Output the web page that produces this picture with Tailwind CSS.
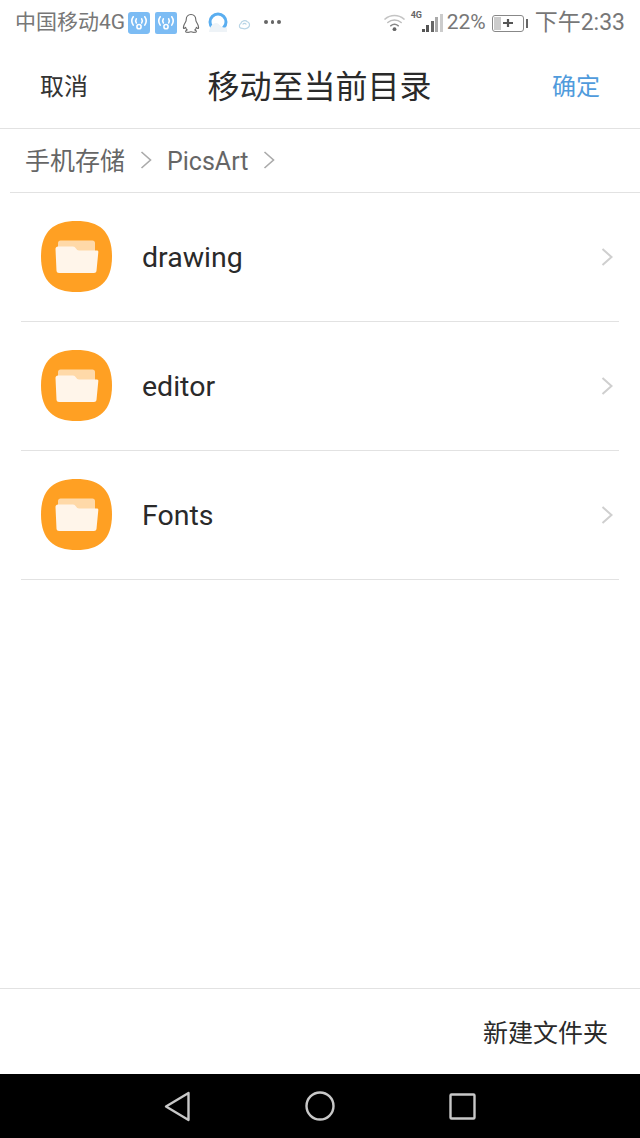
<!DOCTYPE html>
<html lang="zh">
<head>
  <meta charset="UTF-8" />
  <meta name="viewport" content="width=device-width, initial-scale=1.0" />
  <title>移动至当前目录</title>
  <script src="https://cdn.jsdelivr.net/npm/@tailwindcss/browser@4"></script>
</head>
<body class="bg-white font-['Roboto','Noto_Sans_CJK_SC',sans-serif]">
  <div class="w-[640px] h-[1138px] flex flex-col overflow-hidden">

    <!-- status bar -->
    <div class="h-[46px] flex items-center justify-between pl-[15px] pr-[15px] text-[#777] text-[21px] shrink-0">
      <div class="flex items-center">
        <span class="w-[112px] whitespace-nowrap">中国移动4G</span>
        <svg class="ml-[1px]" width="22" height="22" viewBox="0 0 21 21">
          <rect width="21" height="21" rx="3" fill="#7cbcf4"/>
          <g fill="none" stroke="#fff" stroke-width="1.5" stroke-linecap="round">
            <path d="M5 4.500a7 7 0 0 0 0 8"/><path d="M16 4.500a7 7 0 0 1 0 8"/>
            <path d="M8 6.500a3.500 3.500 0 0 0 0 4"/><path d="M13 6.500a3.500 3.500 0 0 1 0 4"/>
            <circle cx="10.500" cy="14" r="2"/>
          </g>
        </svg>
        <svg class="ml-[5px]" width="22" height="22" viewBox="0 0 21 21">
          <rect width="21" height="21" rx="2" fill="#7cbcf4"/>
          <g fill="none" stroke="#fff" stroke-width="1.5" stroke-linecap="round">
            <path d="M5 4.500a7 7 0 0 0 0 8"/><path d="M16 4.500a7 7 0 0 1 0 8"/>
            <path d="M8 6.500a3.500 3.500 0 0 0 0 4"/><path d="M13 6.500a3.500 3.500 0 0 1 0 4"/>
            <circle cx="10.500" cy="14" r="2"/>
          </g>
        </svg>
        <!-- qq -->
        <svg class="ml-[5px]" width="18" height="21" viewBox="0 0 18 21" fill="none" stroke="#666" stroke-width="1.100" stroke-linejoin="round">
          <path d="M9 1.500c-3.200 0-4.800 2.300-4.800 5.200 0 1-.2 1.600-.8 2.600-1 1.600-2 3.600-2 5.200 0 1 .5 1.200 1 .8l1.200-1c.3 1.100.8 2 1.600 2.700-1 .4-1.800 1-1.500 1.700.4.800 3 .8 4.300.2.500-.2 1.500-.2 2 0 1.300.6 3.900.6 4.300-.2.300-.7-.5-1.300-1.500-1.700.8-.7 1.300-1.600 1.600-2.700l1.200 1c.5.400 1 .2 1-.8 0-1.600-1-3.600-2-5.200-.6-1-.8-1.600-.8-2.600C13.800 3.800 12.200 1.500 9 1.500z"/>
        </svg>
        <!-- browser round icon -->
        <svg class="ml-[8px]" width="20" height="22" viewBox="0 0 20 22">
          <circle cx="10" cy="10" r="8" fill="none" stroke="#5aaef0" stroke-width="3"/>
          <path d="M1 20c1-6 4-9 7-9 3 0 4 3 6 4 2 .7 4 .5 5 .5v4.500z" fill="#eef3f7"/>
        </svg>
        <!-- small cloud -->
        <svg class="ml-[10px] mt-[2px]" width="13" height="13" viewBox="0 0 14 14" fill="none" stroke="#b9d5e6" stroke-width="1.300">
          <path d="M3 11c-2-1-2-4 0-5 .5-3 5-4 7-2 2 .5 3 3 2 5-1 2-4 3-6 2.500z"/>
          <path d="M5 7c1-1.500 3-1.500 4 0" />
        </svg>
        <div class="ml-[13px] flex gap-[3px] -mt-[2px]">
          <span class="w-[3.500px] h-[3.500px] rounded-full bg-[#666]"></span>
          <span class="w-[3.500px] h-[3.500px] rounded-full bg-[#666]"></span>
          <span class="w-[3.500px] h-[3.500px] rounded-full bg-[#666]"></span>
        </div>
      </div>
      <div class="flex items-center">
        <svg class="-mt-[3px]" width="23" height="20" viewBox="0 0 24 20" fill="none" stroke-linecap="round">
          <path d="M2 7c6-5 14-5 20 0" stroke="#c4c4c4" stroke-width="1.500"/>
          <path d="M5 10.500c4-3.500 10-3.500 14 0" stroke="#bbb" stroke-width="1.500"/>
          <path d="M8 14c2.500-2 5.500-2 8 0" stroke="#888" stroke-width="1.500"/>
          <circle cx="12" cy="17.500" r="2" fill="#666"/>
        </svg>
        <div class="relative ml-[5px] w-[33px] h-[22px] -mt-[3px]">
          <span class="absolute left-0 -top-[1px] text-[9px] font-bold text-[#666] leading-[10px]">4G</span>
          <div class="absolute left-[11px] bottom-[1px] flex items-end gap-[1.500px]">
            <span class="w-[3px] h-[3px] bg-[#555]"></span>
            <span class="w-[3px] h-[7px] bg-[#555]"></span>
            <span class="w-[3px] h-[11px] bg-[#666]"></span>
            <span class="w-[3px] h-[15px] bg-[#aaa]"></span>
            <span class="w-[3px] h-[18px] bg-[#ccc]"></span>
          </div>
        </div>
        <span class="ml-[3px]">22%</span>
        <!-- battery -->
        <div class="ml-[6px] flex items-center">
          <div class="relative w-[32px] h-[17px] border border-[#888] rounded-[3px] flex items-center justify-center">
            <div class="absolute left-[1px] top-[1px] bottom-[1px] w-[7px] bg-[#ccc]"></div>
            <svg class="relative" width="12" height="10" viewBox="0 0 12 10"><path d="M1 5h10M6 1v8" stroke="#555" stroke-width="2.200"/></svg>
          </div>
          <div class="ml-[2px] w-[2px] h-[9px] bg-[#666]"></div>
        </div>
        <span class="ml-[7px] text-[23px] whitespace-nowrap">下午2:33</span>
      </div>
    </div>

    <!-- title bar -->
    <div class="h-[83px] flex items-center justify-between pl-[40px] pr-[40px] border-b border-[#e2e2e2] shrink-0">
      <span class="text-[24px] text-[#333]">取消</span>
      <span class="text-[32px] text-[#2a2a2a] -ml-[1px]">移动至当前目录</span>
      <span class="text-[24px] text-[#4f9bdc]">确定</span>
    </div>

    <!-- breadcrumb -->
    <div class="ml-[10px] h-[64px] flex items-center pl-[15px] border-b border-[#e2e2e2] text-[#666] text-[25px] shrink-0">
      <span class="mt-[3px]">手机存储</span>
      <svg class="ml-[15px] -mt-[2px]" width="12" height="20" viewBox="0 0 12 20" fill="none" stroke="#aaa" stroke-width="1.600"><path d="M1.500 2l9 8-9 8"/></svg>
      <span class="ml-[15px] mt-[3px]">PicsArt</span>
      <svg class="ml-[15px] -mt-[2px]" width="12" height="20" viewBox="0 0 12 20" fill="none" stroke="#aaa" stroke-width="1.600"><path d="M1.500 2l9 8-9 8"/></svg>
    </div>

    <!-- folder list -->
    <div class="flex flex-col">
      <div class="mx-[21px] h-[129px] flex items-center border-b border-[#e2e2e2]">
        <svg class="ml-[20px] -mt-[1px]" width="71" height="71" viewBox="0 0 71 71">
          <path d="M35.500 0C58 0 71 10 71 35.500S58 71 35.500 71 0 61 0 35.500 13 0 35.500 0z" fill="#ffa023"/>
          <path d="M17 22c0-1.500 1-2.500 2.500-2.500h32c1.500 0 2.500 1 2.500 2.500v12H17z" fill="#ffd9a8"/>
          <path d="M14.500 28c0-1.500 1-2.500 2.500-2.500h15c1.500 0 2 .7 3 2 .8 1.200 1.500 2 3 2H56c1 0 1.500 .8 1.300 1.800l-1.800 18.500c-.2 1.400-1.200 2.200-2.500 2.200H18c-1.300 0-2.300-.8-2.500-2.200z" fill="#fff5ea"/>
        </svg>
        <span class="ml-[30px] text-[28.500px] text-[#2a2a2a] mt-[3px]">drawing</span>
        <svg class="ml-auto mr-[6px] -mt-[1px]" width="12" height="20" viewBox="0 0 12 20" fill="none" stroke="#cfcfcf" stroke-width="2"><path d="M1.500 2l9 8-9 8"/></svg>
      </div>
      <div class="mx-[21px] h-[129px] flex items-center border-b border-[#e2e2e2]">
        <svg class="ml-[20px] -mt-[1px]" width="71" height="71" viewBox="0 0 71 71">
          <path d="M35.500 0C58 0 71 10 71 35.500S58 71 35.500 71 0 61 0 35.500 13 0 35.500 0z" fill="#ffa023"/>
          <path d="M17 22c0-1.500 1-2.500 2.500-2.500h32c1.500 0 2.500 1 2.500 2.500v12H17z" fill="#ffd9a8"/>
          <path d="M14.500 28c0-1.500 1-2.500 2.500-2.500h15c1.500 0 2 .7 3 2 .8 1.200 1.500 2 3 2H56c1 0 1.500 .8 1.300 1.800l-1.800 18.500c-.2 1.400-1.200 2.200-2.500 2.200H18c-1.300 0-2.300-.8-2.500-2.200z" fill="#fff5ea"/>
        </svg>
        <span class="ml-[30px] text-[28.500px] text-[#2a2a2a] mt-[3px]">editor</span>
        <svg class="ml-auto mr-[6px] -mt-[1px]" width="12" height="20" viewBox="0 0 12 20" fill="none" stroke="#cfcfcf" stroke-width="2"><path d="M1.500 2l9 8-9 8"/></svg>
      </div>
      <div class="mx-[21px] h-[129px] flex items-center border-b border-[#e2e2e2]">
        <svg class="ml-[20px] -mt-[1px]" width="71" height="71" viewBox="0 0 71 71">
          <path d="M35.500 0C58 0 71 10 71 35.500S58 71 35.500 71 0 61 0 35.500 13 0 35.500 0z" fill="#ffa023"/>
          <path d="M17 22c0-1.500 1-2.500 2.500-2.500h32c1.500 0 2.500 1 2.500 2.500v12H17z" fill="#ffd9a8"/>
          <path d="M14.500 28c0-1.500 1-2.500 2.500-2.500h15c1.500 0 2 .7 3 2 .8 1.200 1.500 2 3 2H56c1 0 1.500 .8 1.300 1.800l-1.800 18.500c-.2 1.400-1.200 2.200-2.500 2.200H18c-1.300 0-2.300-.8-2.500-2.200z" fill="#fff5ea"/>
        </svg>
        <span class="ml-[30px] text-[28.500px] text-[#2a2a2a] mt-[3px]">Fonts</span>
        <svg class="ml-auto mr-[6px] -mt-[1px]" width="12" height="20" viewBox="0 0 12 20" fill="none" stroke="#cfcfcf" stroke-width="2"><path d="M1.500 2l9 8-9 8"/></svg>
      </div>
    </div>

    <div class="flex-1"></div>

    <!-- bottom action -->
    <div class="h-[86px] border-t border-[#e2e2e2] flex items-center justify-end pr-[32px] shrink-0">
      <span class="text-[25px] text-[#2a2a2a] mt-[4px]">新建文件夹</span>
    </div>

    <!-- nav bar -->
    <div class="h-[64px] bg-black flex items-center justify-between pl-[164px] pr-[164px] shrink-0">
      <svg width="26" height="31" viewBox="0 0 26 31" fill="none" stroke="#c8c8c8" stroke-width="2.400" stroke-linejoin="round"><path d="M24.500 2L2 15.500 24.500 29z"/></svg>
      <svg width="30" height="30" viewBox="0 0 30 30" fill="none" stroke="#c8c8c8" stroke-width="2.400"><circle cx="15" cy="15" r="13.500"/></svg>
      <svg width="27" height="27" viewBox="0 0 27 27" fill="none" stroke="#c8c8c8" stroke-width="2.400" stroke-linejoin="round"><rect x="1.500" y="1.500" width="24" height="24" rx="1"/></svg>
    </div>
  </div>
</body>
</html>
